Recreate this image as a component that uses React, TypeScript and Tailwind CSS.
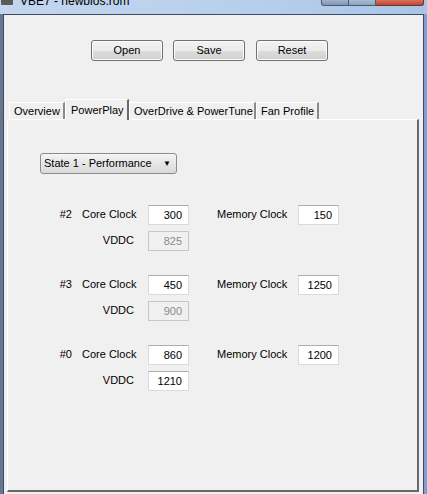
import React from 'react';

const font = { fontFamily: '"Liberation Sans", Arial, sans-serif' };

type Row = {
	id: string;
	core: string;
	mem: string;
	vddc: string;
	vddcLocked: boolean;
};

const rows: Row[] = [
	{ id: '#2', core: '300', mem: '150', vddc: '825', vddcLocked: true },
	{ id: '#3', core: '450', mem: '1250', vddc: '900', vddcLocked: true },
	{ id: '#0', core: '860', mem: '1200', vddc: '1210', vddcLocked: false },
];

function WinButton({ label }: { label: string }) {
	return (
		<button className="w-[72px] h-[21px] rounded-[3px] border border-[#707070] bg-[linear-gradient(#f2f2f2_0%,#ebebeb_50%,#dddddd_51%,#cfcfcf_100%)] text-[11px] text-black leading-none shadow-[inset_0_0_0_1px_#fcfcfc]">
			{label}
		</button>
	);
}

function Field({ value, disabled }: { value: string; disabled?: boolean }) {
	return (
		<div
			className={
				'w-[41px] h-[20px] border flex items-center justify-end pr-[6px] text-[11px] ' +
				(disabled
					? 'border-[#c7c7c7] bg-[#f0f0f0] text-[#8a8a8a]'
					: 'border-[#dadada] border-t-[#abadb3] bg-white text-black')
			}
		>
			{value}
		</div>
	);
}

function Tab({ label, selected, width }: { label: string; selected?: boolean; width: string }) {
	if (selected) {
		return (
			<div className={`${width} h-[21px] -mb-[1px] relative z-10 bg-[#f0f0f0] border-l border-l-white border-t border-t-white border-r-2 border-r-[#696969] flex items-center pl-[5px] text-[11px]`}>
				{label}
			</div>
		);
	}
	return (
		<div className={`${width} h-[17px] bg-[#f0f0f0] border-l border-l-white border-t border-t-white border-r-2 border-r-[#8a8a8a] flex items-center pl-[4px] text-[11px]`}>
			{label}
		</div>
	);
}

export default function App() {
	return (
		<div className="w-[427px] h-[494px] overflow-hidden bg-[#8aa9d6] flex flex-col text-black" style={font}>
			{/* title bar */}
			<div className="h-[14px] shrink-0 flex bg-[linear-gradient(90deg,#c3d6ee,#b7cfec_60%,#a9c4e8)] overflow-hidden">
				<div className="w-[12px] h-[5px] bg-[#5a5a5a] rounded-b-[1px] ml-[1px]" />
				<div className="ml-[7px] -mt-[6px] text-[12px] leading-[14px] text-black">VBE7 - newbios.rom</div>
				<div className="ml-auto flex h-[6px]">
					<div className="w-[28px] border border-t-0 border-[#4a5a72] rounded-bl-[3px] bg-[linear-gradient(#9fb3cc,#7f94b2)]" />
					<div className="w-[27px] border border-t-0 border-l-0 border-[#4a5a72] bg-[linear-gradient(#a9bbd2,#8ea3bf)]" />
					<div className="w-[48px] border border-t-0 border-l-0 border-[#5a3a35] rounded-br-[3px] bg-[linear-gradient(#d8735c,#c5452c)] mr-[3px]" />
				</div>
			</div>
			{/* frame + client */}
			<div className="flex flex-1 min-h-0">
				<div className="w-[3px] shrink-0 bg-[#66778f]" />
				<div className="w-[421px] shrink-0 border border-[#3d4b63] border-b-0 bg-[#f0f0f0] flex flex-col">
					<div className="flex items-start pl-[87px] pt-[25px]">
						<WinButton label="Open" />
						<div className="flex ml-[10px]">
							<WinButton label="Save" />
						</div>
						<div className="flex ml-[11px]">
							<WinButton label="Reset" />
						</div>
					</div>
					{/* tabs */}
					<div className="mt-[38px] pl-[5px] flex items-end">
						<Tab label="Overview" width="w-[56px]" />
						<Tab label="PowerPlay" selected width="w-[64px]" />
						<Tab label="OverDrive & PowerTune" width="w-[127px]" />
						<Tab label="Fan Profile" width="w-[63px]" />
					</div>
					<div className="ml-[3px] w-[412px] h-[373px] border-t border-l border-t-white border-l-white border-r-2 border-b-2 border-r-[#696969] border-b-[#696969] pl-[32px] pt-[33px]">
						<div className="w-[137px] h-[21px] rounded-[3px] border border-[#8d8d8d] bg-[linear-gradient(#f5f5f5,#e6e6e6_50%,#dadada)] flex items-center pl-[3px] pr-[5px] text-[11px]">
							<span>State 1 - Performance</span>
							<span className="ml-auto text-[8px] leading-none">▼</span>
						</div>
						<div className="mt-[31px] flex flex-col gap-[24px]">
							{rows.map(r => (
								<div key={r.id} className="flex flex-col gap-[6px]">
									<div className="flex items-center h-[20px]">
										<div className="w-[32px] text-right text-[11px] -mt-[2px]">{r.id}</div>
										<div className="w-[52px] ml-[10px] text-[11px] whitespace-nowrap -mt-[2px]">Core Clock</div>
										<div className="ml-[14px]">
											<Field value={r.core} />
										</div>
										<div className="w-[81px] ml-[28px] text-[11px] whitespace-nowrap -mt-[2px]">Memory Clock</div>
										<Field value={r.mem} />
									</div>
									<div className="flex items-center h-[20px]">
										<div className="w-[94px] text-right text-[11px] -mt-[2px]">VDDC</div>
										<div className="ml-[14px]">
											<Field value={r.vddc} disabled={r.vddcLocked} />
										</div>
									</div>
								</div>
							))}
						</div>
					</div>
				</div>
				<div className="flex-1 bg-[#7d9fd3]" />
			</div>
		</div>
	);
}
